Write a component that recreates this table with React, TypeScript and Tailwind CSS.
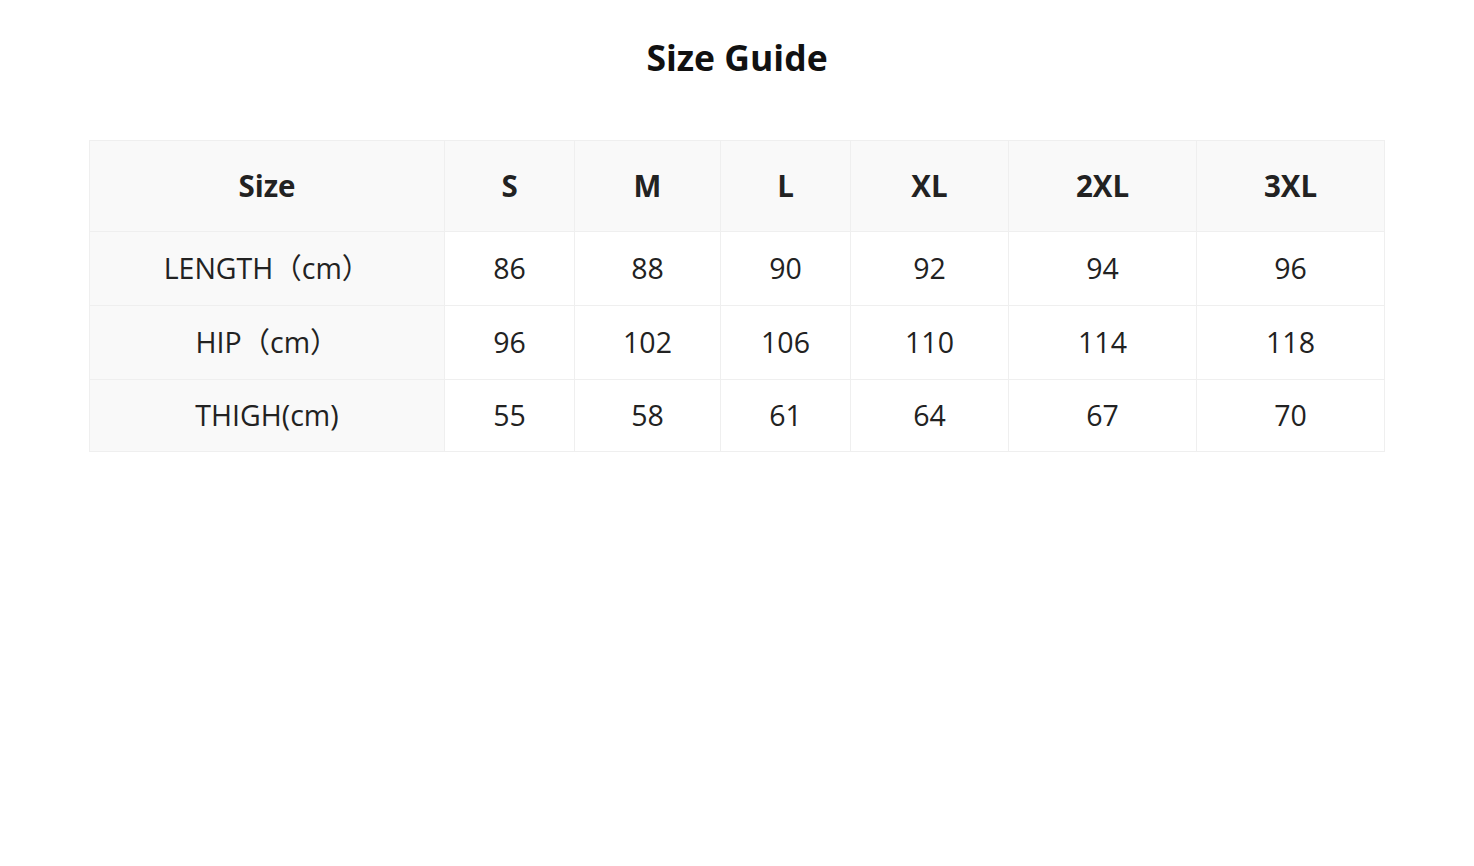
const sizes = ["S", "M", "L", "XL", "2XL", "3XL"];

const rows = [
  { label: "LENGTH（cm）", values: [86, 88, 90, 92, 94, 96] },
  { label: "HIP（cm）", values: [96, 102, 106, 110, 114, 118] },
  { label: "THIGH(cm)", values: [55, 58, 61, 64, 67, 70] },
];

const colWidths = ["w-[355px]", "w-[130px]", "w-[146px]", "w-[130px]", "w-[158px]", "w-[188px]", "w-[188px]"];

export default function App() {
  return (
    <main
      className="min-h-screen bg-white text-[#222]"
      style={{ fontFamily: '"Open Sans", "Noto Sans CJK SC", sans-serif' }}
    >
      <h1 className="pt-[33px] text-center text-[35.5px] font-bold leading-[48px] text-[#111]">
        Size Guide
      </h1>

      <div className="mt-[59px] flex justify-center">
        <table className="w-[1295px] table-fixed border-collapse border border-[#efefef]">
          <colgroup>
            {colWidths.map((w, i) => (
              <col key={i} className={w} />
            ))}
          </colgroup>
          <thead>
            <tr className="h-[91px] bg-[#f9f9f9]">
              <th className="border border-[#efefef] text-[29.5px] font-bold">Size</th>
              {sizes.map((s) => (
                <th key={s} className="border border-[#efefef] text-[29.5px] font-bold">
                  {s}
                </th>
              ))}
            </tr>
          </thead>
          <tbody>
            {rows.map((row, r) => (
              <tr key={row.label} className={r === 2 ? "h-[72px]" : "h-[74px]"}>
                <td className="border border-[#efefef] bg-[#f9f9f9] text-center text-[28.5px]">
                  {row.label}
                </td>
                {row.values.map((v, i) => (
                  <td key={i} className="border border-[#efefef] text-center text-[28.5px]">
                    {v}
                  </td>
                ))}
              </tr>
            ))}
          </tbody>
        </table>
      </div>
    </main>
  );
}
